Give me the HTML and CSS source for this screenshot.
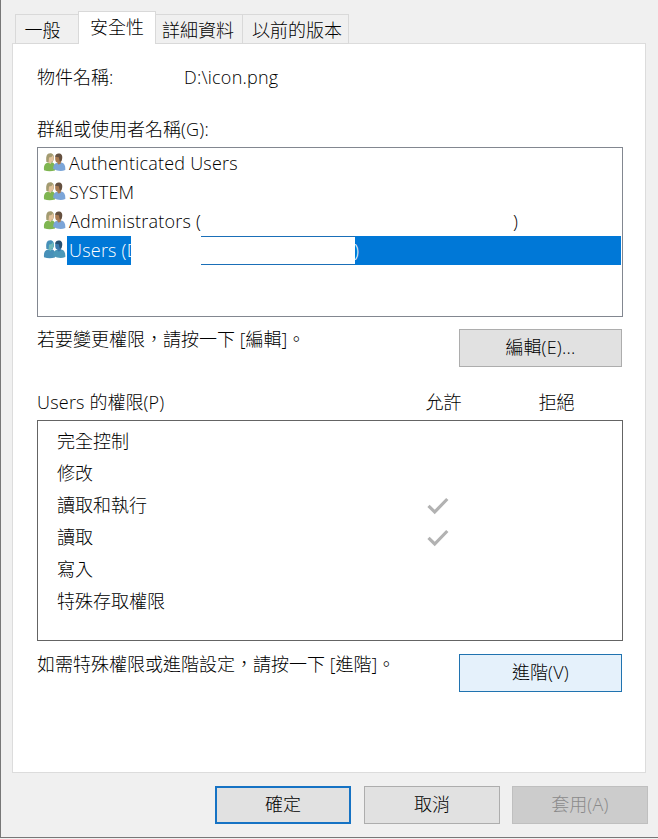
FILE: index.html
```html
<!DOCTYPE html>
<html lang="zh-TW">
<head>
    <meta charset="UTF-8">
    <meta name="viewport" content="width=device-width, initial-scale=1.0">
    <title>icon.png - 內容</title>
    <link rel="stylesheet" href="styles.css">
</head>
<body>
    <!-- Shared icon shapes -->
    <svg class="sprite" width="0" height="0">
        <symbol id="users" viewBox="0 0 23 20">
            <path class="girl-body" d="M1 18.2C.6 14 1.4 11.2 5 10.4L9.5 10.4C12 11.5 12.5 14 12 18.5Q6 20 1 18.2Z"/>
            <path class="girl-hair" d="M3.4 10C2.6 4.5 3.8 1.2 7.2 1.2C10.3 1.2 11.3 3.5 10.8 7.5L9.5 10.5Z"/>
            <path class="girl-face" d="M6 5.5Q9 5.5 9.7 3.3Q11.2 5 10.6 7.8Q9.8 10 8 10L8 12L5.5 11Z"/>
            <path class="boy-body" d="M10.2 17C10.3 13 11.5 11.3 14.5 10.8L18.5 10.6C21.6 11.5 22.5 14 22.3 18Q17 20.5 10.2 17Z"/>
            <path class="boy-face" d="M12.3 4.5L18 4.5L18.5 8L17.5 12L15 12.5L14.3 10.5C12.3 10.5 12 7 12.3 4.5Z"/>
            <path class="boy-hair" d="M12 4.8C12.5 1.8 14.5 1.2 16.5 1.6C19.6 2.2 20 6 18.3 9.3L16.8 9.5L15.8 5.3Z"/>
        </symbol>
        <symbol id="check" viewBox="0 0 22 18">
            <path d="M1.5 8.8L7.7 15L20.3 2" fill="none" stroke="#b2b2b2" stroke-width="3.2"/>
        </symbol>
    </svg>

    <div class="dialog">
        <div class="tabs">
            <div class="tab tab-general">一般</div>
            <div class="tab tab-security active">安全性</div>
            <div class="tab tab-details">詳細資料</div>
            <div class="tab tab-versions">以前的版本</div>
        </div>

        <div class="panel">
            <div class="object-row">
                <span class="object-label">物件名稱:</span>
                <span class="latin">D:\icon.png</span>
            </div>

            <div class="group-label">群組或使用者名稱<span class="latin">(G):</span></div>
            <div class="group-list latin">
                <div class="group">
                    <svg class="users-icon"><use href="#users"/></svg>
                    <span class="group-name">Authenticated Users</span>
                </div>
                <div class="group">
                    <svg class="users-icon"><use href="#users"/></svg>
                    <span class="group-name">SYSTEM</span>
                </div>
                <div class="group">
                    <svg class="users-icon"><use href="#users"/></svg>
                    <span class="group-name admin-name">Administrators (</span>
                    <span>)</span>
                </div>
                <div class="group selected">
                    <svg class="users-icon"><use href="#users"/></svg>
                    <span class="group-name">Users (D</span>
                    <span class="hidden-name"></span>
                    <span class="selected-rest"><span class="paren">)</span></span>
                </div>
            </div>

            <div class="action-row">
                <span>若要變更權限，請按一下 [編輯]。</span>
                <button class="btn btn-wide">編輯<span class="latin">(E)...</span></button>
            </div>

            <div class="perm-header">
                <span class="perm-title"><span class="latin">Users</span> 的權限<span class="latin">(P)</span></span>
                <span class="perm-col">允許</span>
                <span class="perm-col">拒絕</span>
            </div>
            <div class="perm-list">
                <div class="perm"><span class="perm-name">完全控制</span></div>
                <div class="perm"><span class="perm-name">修改</span></div>
                <div class="perm"><span class="perm-name">讀取和執行</span><svg class="check-icon"><use href="#check"/></svg></div>
                <div class="perm"><span class="perm-name">讀取</span><svg class="check-icon"><use href="#check"/></svg></div>
                <div class="perm"><span class="perm-name">寫入</span></div>
                <div class="perm"><span class="perm-name">特殊存取權限</span></div>
            </div>

            <div class="action-row advanced-row">
                <span>如需特殊權限或進階設定，請按一下 [進階]。</span>
                <button class="btn btn-wide hot">進階<span class="latin">(V)</span></button>
            </div>
        </div>

        <div class="footer">
            <button class="btn default">確定</button>
            <button class="btn">取消</button>
            <button class="btn" disabled>套用<span class="latin">(A)</span></button>
        </div>
    </div>
</body>
</html>
```
FILE: styles.css
```css
* {
    box-sizing: border-box;
}

body {
    margin: 0;
    overflow: hidden;
    background-color: #f0f0f0;
    font-family: "Open Sans", "Noto Sans CJK TC", sans-serif;
    font-size: 18px;
    font-weight: 300;
    line-height: 24px;
    color: #000;
    white-space: nowrap;
}

.latin {
    font-weight: 360;
    letter-spacing: 0.22px;
}

.sprite {
    position: absolute;
}

.dialog {
    height: 838px;
    padding: 11px 10px 0 11px;
    border-left: 1px solid #777;
    border-bottom: 1px solid #777;
}

/* Tabs */
.tabs {
    display: flex;
    position: relative;
    align-items: flex-end;
    height: 33px;
    margin-bottom: -1px;
    padding-left: 3px;
}

.tab {
    height: 30px;
    padding-top: 3px;
    border: 1px solid #d9d9d9;
    border-left: none;
    text-align: center;
}

.tab-general {
    width: 63px;
    padding-right: 9px;
    border-left: 1px solid #d9d9d9;
    border-right: none;
}

.tab-security {
    width: 78px;
}

.tab-details {
    width: 87px;
    padding-right: 2px;
}

.tab-versions {
    width: 106px;
    padding-left: 3px;
}

.tab.active {
    height: 33px;
    background: #fff;
    border-left: 1px solid #d9d9d9;
    border-bottom: none;
}

.panel {
    width: 634px;
    height: 730px;
    padding: 21px 22px 0 24px;
    background: #fff;
    border: 1px solid #dcdcdc;
}

.object-row {
    display: flex;
}

.object-label {
    width: 147px;
}

.group-label {
    margin-top: 28px;
}

/* Groups and users */
.group-list {
    width: 586px;
    height: 170px;
    margin-top: 6px;
    padding: 1px;
    border: 1px solid #828790;
}

.group {
    display: flex;
    height: 29px;
    padding-left: 4px;
    line-height: 29px;
}

.users-icon {
    width: 23px;
    height: 20px;
    margin-top: 3px;
    margin-right: 1px;
}

.group-name {
    padding-left: 2px;
}

.admin-name {
    width: 446px;
}

.girl-body { fill: #7fb551; }
.girl-hair { fill: #a39b70; }
.girl-face { fill: #e3c39d; }
.boy-body { fill: #7ba5d8; }
.boy-face { fill: #a77950; }
.boy-hair { fill: #65503f; }

.selected .girl-body { fill: #3b94b0; }

.selected .users-icon {
    filter: sepia(1) hue-rotate(165deg) saturate(2.8) brightness(0.72);
}

.selected .group-name {
    width: 64px;
    overflow: hidden;
    background: #0078d7;
    color: #fff;
}

.hidden-name {
    width: 154px;
    margin-left: 70px;
    border-top: 1px solid #1a6fb8;
    border-bottom: 1px solid #1a6fb8;
}

.selected-rest {
    width: 266px;
    overflow: hidden;
    background: #0078d7;
    color: #fff;
}

.paren {
    margin-left: -1px;
}

.action-row {
    display: flex;
    justify-content: space-between;
    width: 585px;
    height: 50px;
    padding-top: 12px;
    line-height: 20px;
}

.advanced-row {
    padding-top: 13px;
    height: 51px;
}

/* Permissions */
.perm-header {
    display: flex;
    height: 53px;
    padding-top: 23px;
}

.perm-title {
    width: 350px;
}

.perm-col {
    width: 113px;
    text-align: center;
}

.perm-list {
    width: 586px;
    height: 221px;
    padding: 4px 0 0 19px;
    border: 1px solid #646464;
}

.perm {
    display: flex;
    align-items: center;
    height: 32px;
}

.perm-name {
    width: 370px;
}

.check-icon {
    width: 22px;
    height: 18px;
    margin-top: 2px;
}

/* Buttons */
.btn {
    width: 136px;
    height: 38px;
    padding: 0 0 2px;
    background: #e1e1e1;
    border: 1px solid #adadad;
    font: inherit;
    color: #000;
}

.btn-wide {
    width: 163px;
}

.btn.hot {
    background: #e5f1fb;
    border-color: #2073b0;
}

.btn.default {
    margin-right: 1px;
    border: 2px solid #1673c4;
}

.btn:disabled {
    background: #ccc;
    border-color: #bfbfbf;
    color: #8a8a8a;
}

.footer {
    display: flex;
    gap: 12px;
    padding: 13px 0 0 203px;
}
```
